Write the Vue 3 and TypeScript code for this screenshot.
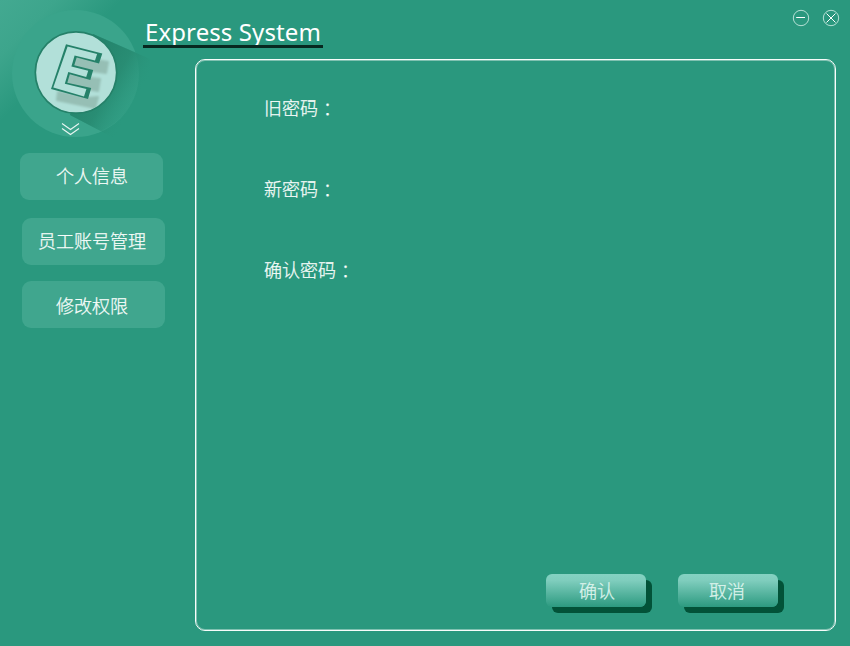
<script setup lang="ts">
import { ref } from 'vue'

const menu = ['个人信息', '员工账号管理', '修改权限']
const fields = ['旧密码', '新密码', '确认密码']
const active = ref(0)
</script>

<template>
  <div class="window">
    <aside class="sidebar">
      <svg class="logo" viewBox="0 0 170 145" width="170" height="145">
        <defs>
          <linearGradient id="cast" gradientUnits="userSpaceOnUse" x1="88" y1="70" x2="137" y2="98">
            <stop offset="0" stop-color="#24846c" />
            <stop offset="0.5" stop-color="#288b72" stop-opacity="0.9" />
            <stop offset="1" stop-color="#2a967c" stop-opacity="0" />
          </linearGradient>
          <linearGradient id="halo" gradientUnits="userSpaceOnUse" x1="100" y1="50" x2="136" y2="76">
            <stop offset="0" stop-color="#2a987e" />
            <stop offset="1" stop-color="#2a987e" stop-opacity="0.5" />
          </linearGradient>
          <filter id="soft" x="-20%" y="-20%" width="140%" height="140%">
            <feGaussianBlur stdDeviation="1.1" />
          </filter>
          <clipPath id="disc"><circle cx="76" cy="72.5" r="40" /></clipPath>
        </defs>
        <circle cx="75.5" cy="73.5" r="63.5" fill="#3aa48b" />
        <path d="M93 34 L137 53 A63.5 63.5 0 0 1 101 131 L70 115 Z" fill="url(#halo)" />
        <path d="M93 34 L150 59 L150 157 L70 115 Z" fill="url(#cast)" />
        <circle cx="76" cy="72.5" r="40.7" fill="#b2e0d9" stroke="#258169" stroke-width="1.7" />
        <g fill="#96bfb5" stroke="#96bfb5" stroke-width="2" stroke-linejoin="round" clip-path="url(#disc)" filter="url(#soft)">
          <path d="M77 57 L108 62 L106 73 L92 71 L74 66 Z" />
          <path d="M69 74 L91 78 L100 79 L98 91 L88 89 L66 83 Z" />
          <path d="M58 92 L88 98 L98 97 L95 108 L57 100 Z" />
        </g>
        <path d="M66 44.2 L102.3 53.5 L99 63.6 L76.7 57.6 L74.3 65.3 L93.2 70 L90.3 80 L69.8 74.2 L67.3 82.7 L91.2 88 L88 99 L51 89 Z" fill="#258169" />
        <path d="M67.6 46.4 L97.1 54.1 L95 60.6 L74.6 55.4 L71.4 66.4 L88.2 70.7 L86.2 77 L68.3 72.1 L64.8 83.7 L86.4 89.1 L84 96.4 L53.3 87.6 Z" fill="#b2e0d9" />
        <path d="M62 123.5 L70.5 129.5 L79 123.5 M62 128.5 L70.5 134.5 L79 128.5" fill="none" stroke="#e8f6f2" stroke-width="1.1" />
      </svg>
      <nav class="menu">
        <button v-for="(item, i) in menu" :key="item" class="menu-item" @click="active = i">
          <span>{{ item }}</span>
        </button>
      </nav>
    </aside>

    <div class="content">
      <header class="header">
        <h1 class="title">Express System</h1>
        <div class="controls">
          <svg viewBox="0 0 18 18" width="18" height="18">
            <circle cx="9" cy="9" r="7.7" />
            <path class="mark" d="M4.2 8.5 H13" />
          </svg>
          <svg viewBox="0 0 18 18" width="18" height="18">
            <circle cx="9" cy="9" r="7.7" />
            <path class="mark" d="M4.5 4.5 L13.5 13.5 M13.5 4.5 L4.5 13.5" />
          </svg>
        </div>
      </header>
      <main class="panel">
        <div class="fields">
          <div v-for="field in fields" :key="field" class="field">
            {{ field }}<span class="colon">：</span>
          </div>
        </div>
        <footer class="actions">
          <button class="action">确认</button>
          <button class="action cancel">取消</button>
        </footer>
      </main>
    </div>
  </div>
</template>

<style>
body {
  background: #2a987e;
}
</style>

<style scoped>
.window {
  box-sizing: border-box;
  width: 850px;
  height: 646px;
  display: flex;
  overflow: hidden;
  color: #f8fdfb;
  font-family: "Noto Sans CJK SC", sans-serif;
  font-size: 18px;
  font-weight: 300;
  -webkit-text-stroke: 0.25px currentColor;
  background: linear-gradient(135deg, #43a991 0, #3da58c 40px, #2a987e 86px);
}
.sidebar {
  width: 143px;
  flex: none;
}
.logo {
  display: block;
  overflow: visible;
}
.menu {
  display: flex;
  flex-direction: column;
  padding: 8px 0 0 22px;
}
.menu-item {
  width: 143px;
  height: 47px;
  margin: 0;
  padding: 0 0 3px 1px;
  border: 0;
  border-radius: 9px;
  background: #40a68e;
  color: inherit;
  font: inherit;
  line-height: 26px;
  white-space: nowrap;
}
.menu-item:nth-child(1) {
  margin: 0 0 18px -2px;
}
.menu-item:nth-child(2) {
  margin-bottom: 16px;
  padding: 0 3px 4px 0;
}
.menu-item:nth-child(3) {
  padding: 1px 3px 0 0;
}
.content {
  flex: 1;
  display: flex;
  flex-direction: column;
}
.header {
  height: 59px;
  display: flex;
  justify-content: space-between;
  align-items: flex-start;
}
.title {
  position: relative;
  box-sizing: border-box;
  width: 180px;
  height: 31px;
  margin: 17px 0 0;
  padding-left: 2px;
  color: #fff;
  font: 400 24px/29px "Noto Sans", "Open Sans", sans-serif;
  letter-spacing: 0.1px;
  -webkit-text-stroke: 0;
  white-space: nowrap;
}
.title::after {
  content: "";
  position: absolute;
  left: 0;
  right: 0;
  bottom: 0;
  height: 3px;
  background: #07281f;
}
.controls {
  display: flex;
  gap: 12px;
  padding: 9px 10px 0 0;
}
.controls svg {
  fill: none;
  stroke: #b5e0d5;
  stroke-width: 1;
}
.controls .mark {
  stroke: #fff;
}
.panel {
  box-sizing: border-box;
  width: 641px;
  height: 572px;
  margin-left: 52px;
  padding: 34px 57px 18px 68px;
  display: flex;
  flex-direction: column;
  justify-content: space-between;
  border: 1px solid #f8fdfb;
  border-radius: 10px;
  box-shadow: inset 0 0 0 1px rgba(255, 255, 255, 0.4);
}
.field {
  height: 81px;
  line-height: 26px;
}
.colon {
  padding-left: 5px;
}
.actions {
  display: flex;
  justify-content: flex-end;
  gap: 32px;
}
.action {
  width: 100px;
  height: 33px;
  padding: 0 0 1px 2px;
  margin-bottom: 5px;
  border: 0;
  border-radius: 6px;
  background: linear-gradient(#84d2c2 0, #7fcdbd 20%, #2c9a80 100%);
  box-shadow: 6px 6px 0 #025238;
  color: #def4ed;
  font: inherit;
  line-height: 26px;
}
.cancel {
  padding: 0 2px 1px 0;
}
</style>
